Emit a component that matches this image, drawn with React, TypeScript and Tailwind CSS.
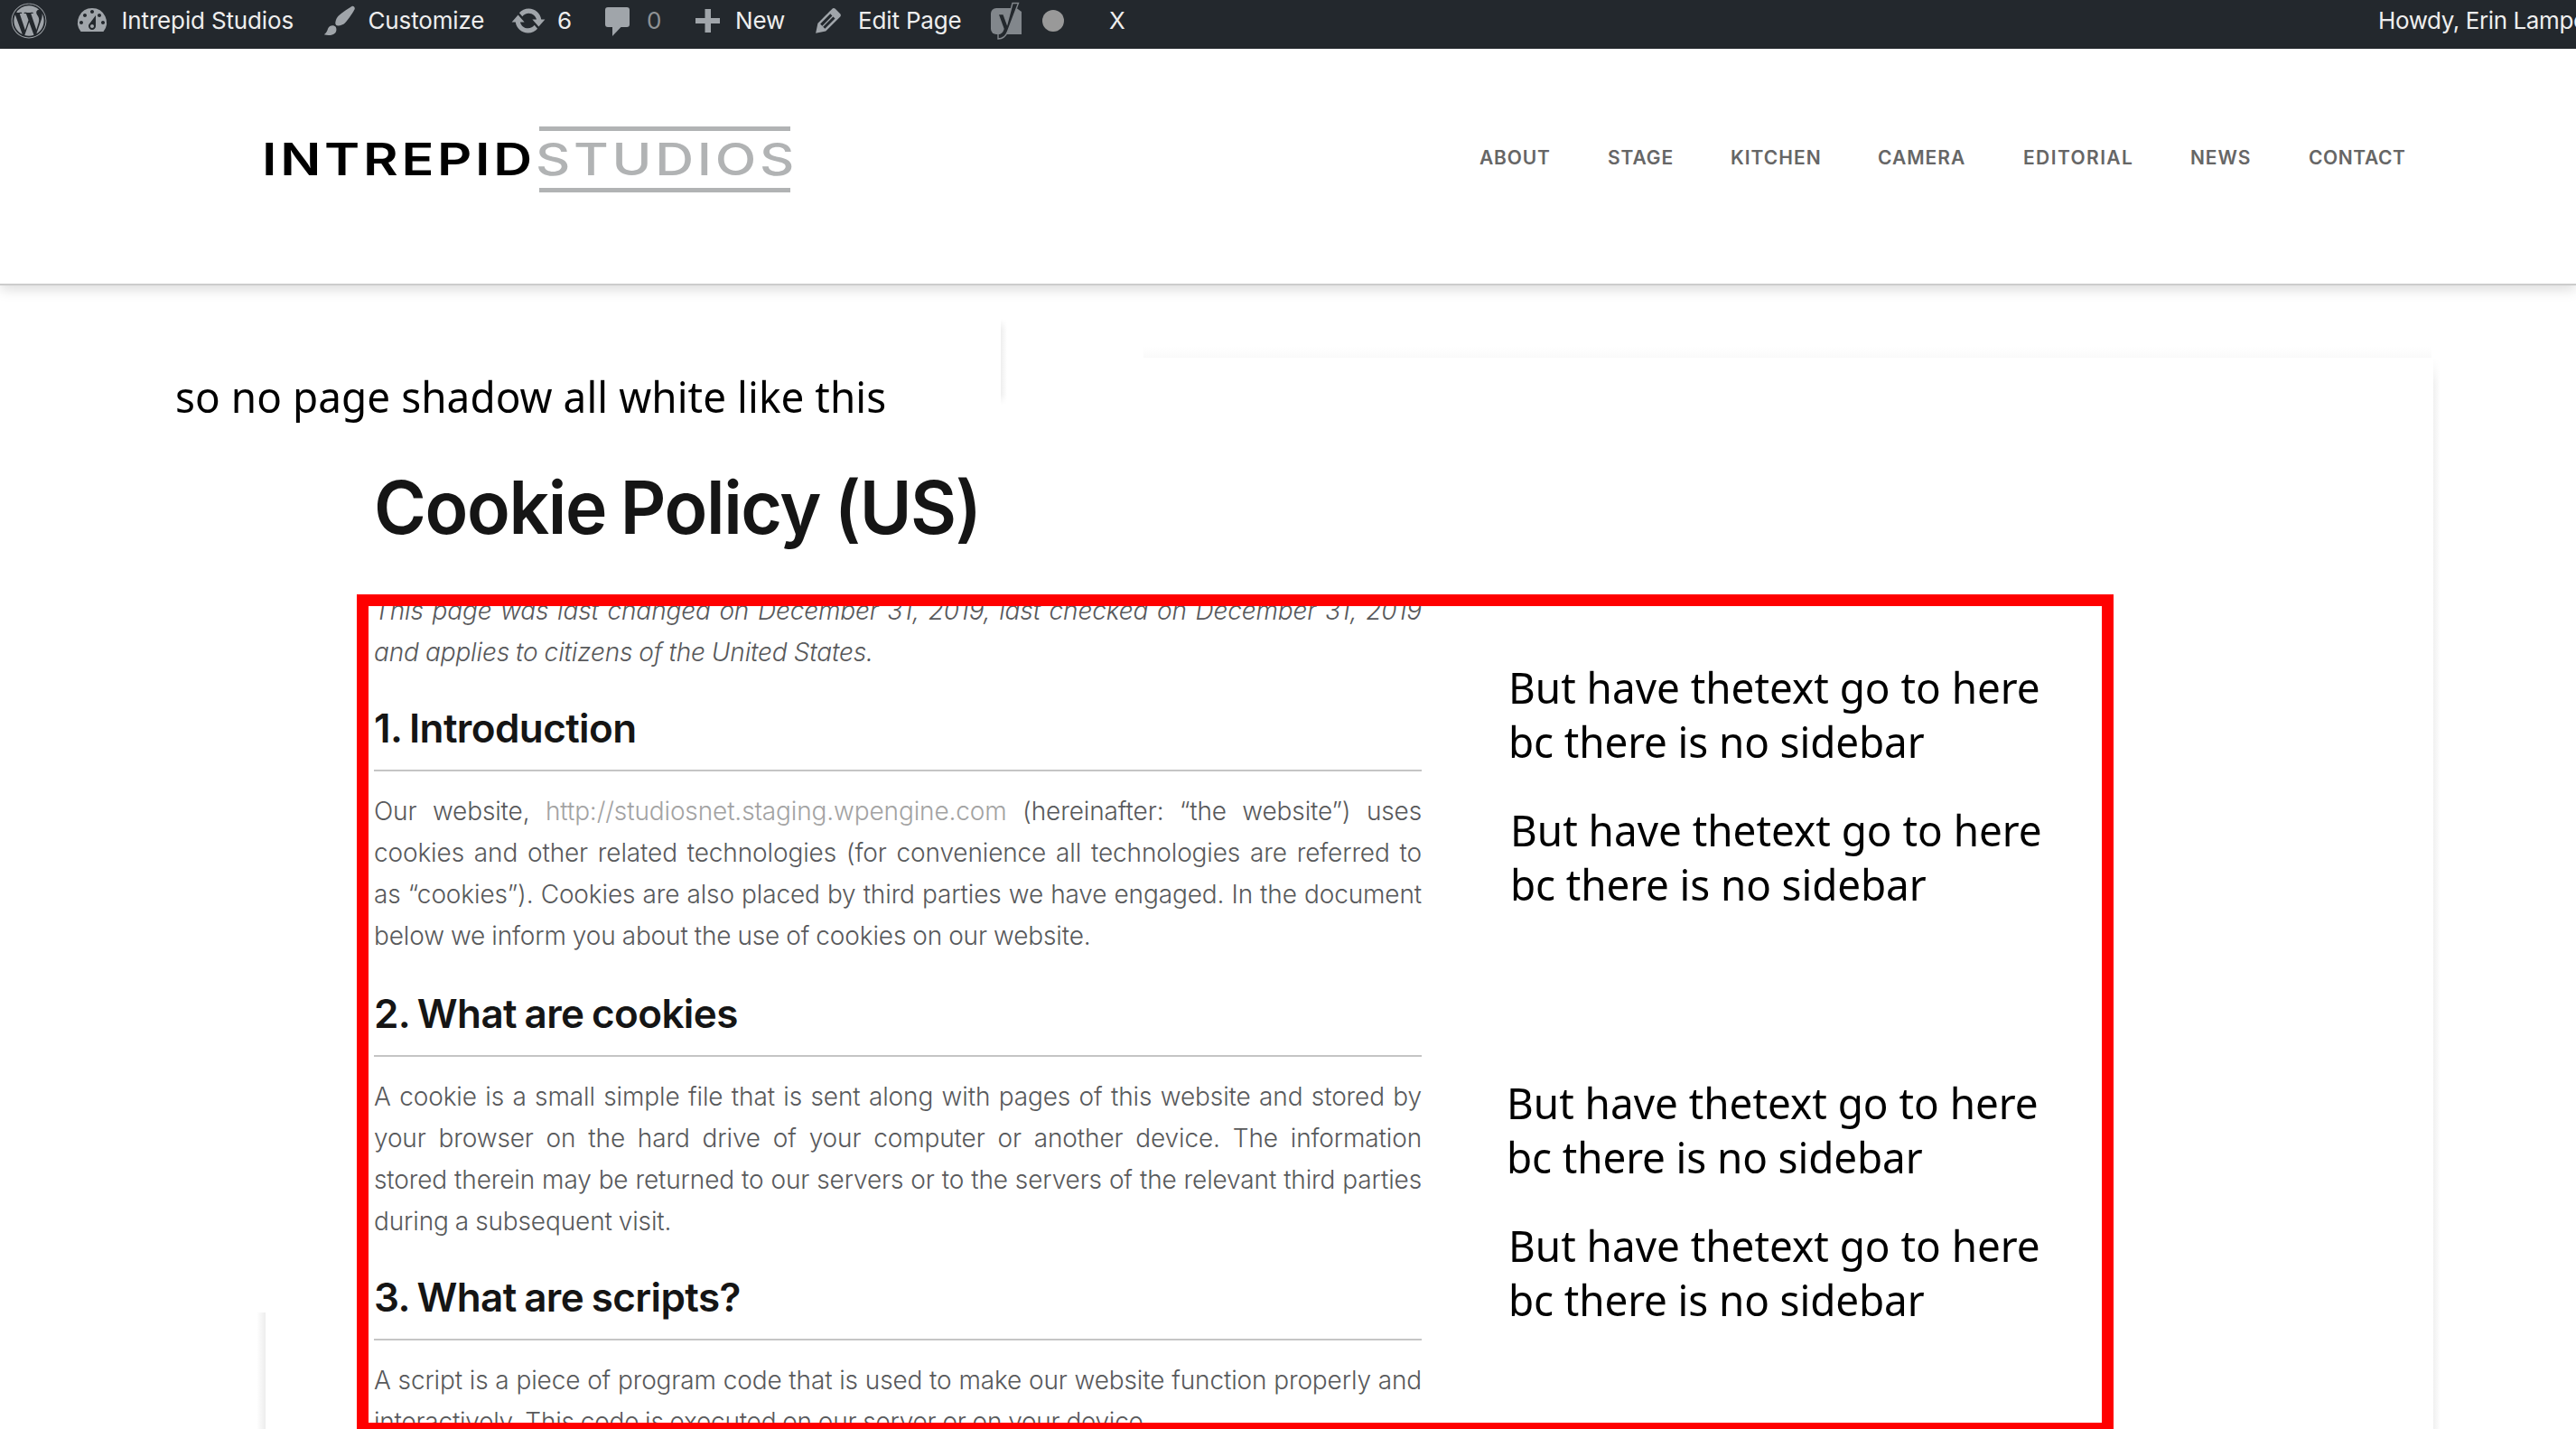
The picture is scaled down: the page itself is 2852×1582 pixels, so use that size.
import type { ReactNode } from "react";
import { FaWordpress } from "react-icons/fa";

/* ---------- admin bar ---------- */

function BarIcon({ d, className }: { d: string; className: string }) {
  return (
    <svg viewBox="0 0 20 20" className={`size-10 shrink-0 fill-[#a0a5aa] ${className}`}>
      <path d={d} />
    </svg>
  );
}

const dashboardPath =
  "M3.76 16h12.48A7.998 7.998 0 0 0 10 3a7.998 7.998 0 0 0-6.24 13zM10 4c.55 0 1 .45 1 1s-.45 1-1 1-1-.45-1-1 .45-1 1-1zM6 6c.55 0 1 .45 1 1s-.45 1-1 1-1-.45-1-1 .45-1 1-1zm8 0c.55 0 1 .45 1 1s-.45 1-1 1-1-.45-1-1 .45-1 1-1zm-5.37 5.55L12 7v6c0 1.1-.9 2-2 2s-2-.9-2-2c0-.57.24-1.08.63-1.45zM4 10c.55 0 1 .45 1 1s-.45 1-1 1-1-.45-1-1 .45-1 1-1zm12 0c.55 0 1 .45 1 1s-.45 1-1 1-1-.45-1-1 .45-1 1-1zm-5 3c0-.55-.45-1-1-1s-1 .45-1 1 .45 1 1 1 1-.45 1-1z";
const brushPath =
  "M18.33 3.57s.27-.8-.31-1.36c-.53-.52-1.22-.24-1.22-.24-.61.3-5.76 3.47-7.67 5.57-.86.96-2.06 3.79-1.09 4.82.92.98 3.96-.17 4.79-1 2.06-2.06 5.21-7.17 5.5-7.79zM1.4 17.65c2.37-1.56 1.46-3.41 3.23-4.64.93-.65 2.22-.62 3.08.29.63.67.8 2.57-.16 3.46-1.57 1.45-4 1.55-6.15.89z";
const updatePath =
  "M10.2 3.28c3.53 0 6.43 2.61 6.92 6h2.08l-3.5 4-3.5-4h2.32c-.45-1.97-2.21-3.45-4.32-3.45-1.45 0-2.73.71-3.54 1.78L4.95 5.66C6.23 4.2 8.11 3.28 10.2 3.28zm-.4 13.44c-3.52 0-6.43-2.61-6.92-6H.8l3.5-4c1.17 1.33 2.33 2.67 3.5 4H5.48c.45 1.97 2.21 3.45 4.32 3.45 1.45 0 2.73-.71 3.54-1.78l1.71 1.95c-1.28 1.46-3.15 2.38-5.25 2.38z";
const pencilPath =
  "M13.89 3.39l2.71 2.72c.46.46.42 1.24.03 1.64l-8.01 8.02-5.56 1.16 1.16-5.58s7.6-7.63 7.99-8.03c.39-.39 1.22-.39 1.68.07zm-2.73 2.79l-5.59 5.61 1.11 1.11 5.54-5.65zm-2.97 8.23l5.58-5.6-1.07-1.08-5.59 5.6z";

function BarItem({ className, children }: { className: string; children: ReactNode }) {
  return <div className={`flex shrink-0 items-center ${className}`}>{children}</div>;
}

function AdminBar() {
  return (
    <div className="flex h-[54px] items-center overflow-hidden whitespace-nowrap bg-[#23282d] pb-[9px] pl-3 text-[26px] leading-9 tracking-[-0.15px] text-[#eee]">
      <BarItem className="w-[70px]">
        <FaWordpress className="size-10 text-[#a0a5aa]" />
      </BarItem>
      <BarItem className="w-[274px]">
        <BarIcon d={dashboardPath} className="mr-[12.5px]" />
        Intrepid Studios
      </BarItem>
      <BarItem className="w-[209px]">
        <BarIcon d={brushPath} className="mr-[11.5px]" />
        Customize
      </BarItem>
      <BarItem className="w-[105px]">
        <BarIcon d={updatePath} className="mr-[12px]" />6
      </BarItem>
      <BarItem className="w-[100px] text-[#8f9295]">
        <svg viewBox="0 0 27 32" className="mr-[19px] mt-[3px] h-8 w-[27px] fill-[#a0a5aa]">
          <path d="M3 0h21a3 3 0 0 1 3 3v16a3 3 0 0 1-3 3h-6.500L8 32V22H3a3 3 0 0 1-3-3V3a3 3 0 0 1 3-3z" />
        </svg>
        0
      </BarItem>
      <BarItem className="w-[127px]">
        <svg viewBox="0 0 27 26" className="mr-[17px] h-[26px] w-[27px] fill-[#a0a5aa]">
          <path d="M10.500 0h6.500v10h10v6H17v10h-6.500V16H0v-6h10.500z" />
        </svg>
        New
      </BarItem>
      <BarItem className="w-[200px]">
        <BarIcon d={pencilPath} className="mr-[13px]" />
        Edit Page
      </BarItem>
      <BarItem className="w-[131px]">
        <svg viewBox="0 0 34 42" className="h-[42px] w-[34px]">
          <path
            d="M6 7h22.500L34 11v25H6a6 6 0 0 1-6-6V13a6 6 0 0 1 6-6z"
            className="fill-[#82878c]"
          />
          <path
            d="M24 1.500h6.500L18.500 33Q15.500 41 8 41v-5.500q4.500-.5 6-5.500L8 13.500h6l4 11z"
            className="fill-[#23282d] stroke-[#82878c] stroke-[1.4]"
          />
        </svg>
        <span className="ml-[23px] size-6 rounded-full bg-[#999]" />
      </BarItem>
      <BarItem className="w-[1405px]">X</BarItem>
      <BarItem className="tracking-[-0.4px]">Howdy, Erin Lampe</BarItem>
    </div>
  );
}

/* ---------- site header ---------- */

function Logo() {
  return (
    <div className="flex h-[73px] text-[49.5px] leading-none font-medium">
      <div className="flex w-[303px] items-center">
        <span className="-ml-[4px] origin-left scale-x-[1.2] font-semibold tracking-[3.1px] text-black">INTREPID</span>
      </div>
      <div className="flex w-[278px] items-center border-y-[5px] border-[#b1b3b4]">
        <span className="-ml-[4px] origin-left scale-x-[1.2] tracking-[3.1px] text-[#b1b3b4]">STUDIOS</span>
      </div>
    </div>
  );
}

const navItems = [
  { label: "ABOUT", className: "w-[142px] tracking-[0.8px]" },
  { label: "STAGE", className: "w-[136px] tracking-[0.9px]" },
  { label: "KITCHEN", className: "w-[163px] tracking-[1px]" },
  { label: "CAMERA", className: "w-[161px] tracking-[1px]" },
  { label: "EDITORIAL", className: "w-[185px] tracking-[1.4px]" },
  { label: "NEWS", className: "w-[131px] tracking-[0.9px]" },
  { label: "CONTACT", className: "w-[108px] tracking-[0.6px]" },
];

function SiteHeader() {
  return (
    <header className="relative z-10 flex h-[262px] items-start justify-between border-b-2 border-[#ccc] bg-white pt-[86px] pr-[188px] pl-[294px] shadow-[0_4px_14px_rgba(0,0,0,0.15)]">
      <Logo />
      <nav className="mt-[20px] flex text-[21px] leading-[29px] font-semibold text-[#666]">
        {navItems.map((item) => (
          <a key={item.label} className={item.className}>
            {item.label}
          </a>
        ))}
      </nav>
    </header>
  );
}

/* ---------- policy text ---------- */

/* Every line but the last one is stretched to the column's full width. */
function Paragraph({ lines, className }: { lines: ReactNode[]; className: string }) {
  return (
    <p className={className}>
      {lines.map((line, i) => (
        <span
          key={i}
          className={
            i < lines.length - 1
              ? "block whitespace-nowrap text-justify [text-align-last:justify]"
              : "block whitespace-nowrap"
          }
        >
          {line}
        </span>
      ))}
    </p>
  );
}

function SectionTitle({ children, className }: { children: ReactNode; className: string }) {
  return (
    <h2
      className={`h-[78px] border-b-2 border-[#c5c5c5] text-[44px] leading-[60px] font-semibold tracking-[-0.6px] text-[#151515] [word-spacing:-2px] ${className}`}
    >
      {children}
    </h2>
  );
}

function Policy() {
  return (
    <article className="w-[1160px] text-[28px] leading-[46px] font-light tracking-[-0.13px] text-[#58595b] [word-spacing:-0.7px]">
      <h1 className="w-max origin-left scale-x-[0.97] pt-[196px] text-[81px] leading-[100px] font-semibold tracking-[-1.4px] text-[#151515] [word-spacing:-3px]">
        Cookie Policy (US)
      </h1>
      <Paragraph
        className="mt-[41px] italic"
        lines={[
          "This page was last changed on December 31, 2019, last checked on December 31, 2019",
          "and applies to citizens of the United States.",
        ]}
      />
      <SectionTitle className="mt-[31px]">1. Introduction</SectionTitle>
      <Paragraph
        className="mt-[21px]"
        lines={[
          <>
            Our website, <a className="text-[#a3a3a3]">http://studiosnet.staging.wpengine.com</a> (hereinafter: “the
            website”) uses
          </>,
          "cookies and other related technologies (for convenience all technologies are referred to",
          "as “cookies”). Cookies are also placed by third parties we have engaged. In the document",
          "below we inform you about the use of cookies on our website.",
        ]}
      />
      <SectionTitle className="mt-[33px]">2. What are cookies</SectionTitle>
      <Paragraph
        className="mt-[21px]"
        lines={[
          "A cookie is a small simple file that is sent along with pages of this website and stored by",
          "your browser on the hard drive of your computer or another device. The information",
          "stored therein may be returned to our servers or to the servers of the relevant third parties",
          "during a subsequent visit.",
        ]}
      />
      <SectionTitle className="mt-[31px]">3. What are scripts?</SectionTitle>
      <Paragraph
        className="mt-[21px]"
        lines={[
          "A script is a piece of program code that is used to make our website function properly and",
          <span className="tracking-[-0.22px]">interactively. This code is executed on our server or on your device.</span>,
        ]}
      />
    </article>
  );
}

/* ---------- markup notes laid over the page ---------- */

function Note({ className, children }: { className: string; children: ReactNode }) {
  return (
    <div
      className={`absolute origin-left scale-x-[0.955] font-['Noto_Sans',sans-serif] text-[48px] leading-[60px] whitespace-nowrap text-black ${className}`}
    >
      {children}
    </div>
  );
}

function SidebarNote({ className }: { className: string }) {
  return (
    <Note className={className}>
      But have thetext go to here
      <br />
      <span className="tracking-[-0.12px]">bc there is no sidebar</span>
    </Note>
  );
}

function Markup() {
  return (
    <>
      <div className="absolute top-[342px] left-[395px] h-[930px] w-[1945px] border-[13px] border-[#ff0000]" />
      <Note className="top-[93px] left-[194px] tracking-[0.07px]">so no page shadow all white like this</Note>
      <SidebarNote className="top-[415px] left-[1670px]" />
      <SidebarNote className="top-[573px] left-[1672px]" />
      <SidebarNote className="top-[875px] left-[1668px]" />
      <SidebarNote className="top-[1033px] left-[1670px]" />
    </>
  );
}

/* Pieces of the page card's shadow that are still visible. */
function CardShadow() {
  return (
    <>
      <div className="absolute top-[37px] left-[1108px] h-[95px] w-[7px] bg-linear-to-r from-[#eeeeee] to-white [mask-image:linear-gradient(transparent,black_12px,black_83px,transparent)]" />
      <div className="absolute top-[68px] left-[1266px] h-[12px] w-[1426px] bg-linear-to-t from-[#fafafa] to-white" />
      <div className="absolute top-[80px] left-[2694px] h-[1186px] w-[8px] bg-linear-to-r from-[#f0f0f0] to-white [mask-image:linear-gradient(transparent,black_30px)]" />
      <div className="absolute top-[1137px] left-[284px] h-[129px] w-[10px] bg-linear-to-l from-[#ededed] to-white" />
    </>
  );
}

export default function App() {
  return (
    <div className="h-[1582px] w-[2852px] overflow-hidden bg-white font-[Inter,sans-serif]">
      <AdminBar />
      <SiteHeader />
      <main className="relative h-[1266px] overflow-hidden pl-[414px]">
        <CardShadow />
        <Policy />
        <Markup />
      </main>
    </div>
  );
}
